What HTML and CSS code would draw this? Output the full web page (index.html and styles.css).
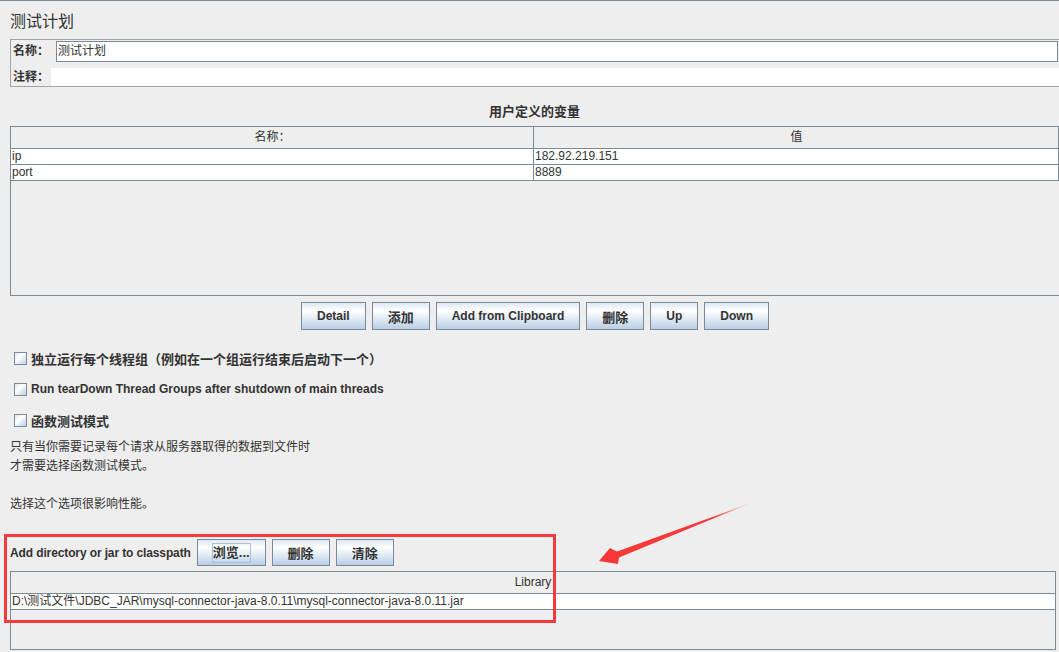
FILE: index.html
```html
<!DOCTYPE html>
<html lang="zh-CN">
<head>
    <meta charset="UTF-8">
    <title>测试计划</title>
    <link rel="stylesheet" href="styles.css">
</head>
<body>
    <div class="window">
        <div class="topline"></div>
        <h1 class="title">测试计划</h1>

        <div class="name-panel">
            <div class="field-row">
                <label class="field-label">名称：</label>
                <div class="text-field">测试计划</div>
            </div>
            <div class="field-row comment-row">
                <label class="field-label">注释：</label>
                <div class="text-area"></div>
            </div>
        </div>

        <div class="section-title">用户定义的变量</div>
        <div class="scroll-pane vars">
            <div class="grid-row head">
                <div class="cell name-col">名称：</div>
                <div class="cell">值</div>
            </div>
            <div class="grid-row">
                <div class="cell name-col">ip</div>
                <div class="cell">182.92.219.151</div>
            </div>
            <div class="grid-row">
                <div class="cell name-col">port</div>
                <div class="cell">8889</div>
            </div>
        </div>

        <div class="button-bar">
            <button class="btn">Detail</button>
            <button class="btn cjk">添加</button>
            <button class="btn">Add from Clipboard</button>
            <button class="btn cjk">删除</button>
            <button class="btn">Up</button>
            <button class="btn">Down</button>
        </div>

        <div class="options">
            <label class="check"><span class="box"></span>独立运行每个线程组（例如在一个组运行结束后启动下一个）</label>
            <label class="check en"><span class="box"></span>Run tearDown Thread Groups after shutdown of main threads</label>
            <label class="check"><span class="box"></span>函数测试模式</label>
        </div>

        <p class="note">只有当你需要记录每个请求从服务器取得的数据到文件时<br>才需要选择函数测试模式。<br><br>选择这个选项很影响性能。</p>

        <div class="classpath">
            <span class="cp-label">Add directory or jar to classpath</span>
            <button class="btn cjk browse"><span class="focus">浏览...</span></button>
            <button class="btn cjk">删除</button>
            <button class="btn cjk">清除</button>
        </div>
        <div class="lib-pane">
            <div class="lib-head">Library</div>
            <div class="lib-row">D:\测试文件\JDBC_JAR\mysql-connector-java-8.0.11\mysql-connector-java-8.0.11.jar</div>
        </div>

        <!-- annotation drawn over the screenshot -->
        <div class="red-box"></div>
        <svg class="arrow" width="1059" height="652" viewBox="0 0 1059 652">
            <defs>
                <linearGradient id="fade" x1="751" y1="503" x2="600" y2="561" gradientUnits="userSpaceOnUse">
                    <stop offset="0" stop-color="#ff6b6b" stop-opacity="0.4"/>
                    <stop offset="0.25" stop-color="#f63c3c"/>
                    <stop offset="1" stop-color="#f53737"/>
                </linearGradient>
            </defs>
            <polygon points="599,561 610,548 617,551.5 751,503 619,557.5 618,564" fill="url(#fade)"/>
        </svg>
    </div>
</body>
</html>
```

FILE: styles.css
```css
body {
    margin: 0;
    padding: 0;
    background: #eeeeee;
    color: #333333;
    font-family: "Liberation Sans", "Noto Sans CJK SC", sans-serif;
    font-size: 12px;
    overflow: hidden;
}

.window {
    position: relative;
    width: 1059px;
    height: 652px;
    overflow: hidden;
}

.topline {
    height: 1px;
    background: #7a8a99;
}

.title {
    margin: 0;
    padding: 11px 0 0 10px;
    font-size: 16px;
    font-weight: normal;
    line-height: 20px;
}

/* name / comment box */
.name-panel {
    margin: 7px 0 0 10px;
    border: 1px solid #a3a3a3;
    border-right: none;
}

.field-row {
    display: flex;
    height: 22px;
}

.field-label {
    width: 45px;
    padding-left: 2px;
    box-sizing: border-box;
    font-weight: bold;
    line-height: 22px;
}

.text-field {
    flex: 1;
    height: 21px;
    margin: 1px 1px 0 0;
    padding-left: 1px;
    box-sizing: border-box;
    border: 1px solid #7a8a99;
    background: #ffffff;
    line-height: 19px;
}

.comment-row {
    height: 24px;
}

.comment-row .field-label {
    width: 40px;
    padding-top: 6px;
    line-height: 18px;
}

.text-area {
    flex: 1;
    height: 18px;
    margin-top: 6px;
    background: #ffffff;
}

.section-title {
    margin-top: 17px;
    padding-left: 10px;
    text-align: center;
    font-size: 13px;
    font-weight: bold;
    line-height: 16px;
}

/* tables */
.scroll-pane {
    margin: 6px 0 0 10px;
    border: 1px solid #7a8a99;
}

.vars {
    height: 168px;
    border-right: none;
}

.grid-row {
    display: flex;
    height: 16px;
    box-sizing: border-box;
    border-bottom: 1px solid #7a8a99;
    border-right: 1px solid #7a8a99;
    background: #ffffff;
}

.grid-row.head {
    height: 22px;
    background: #eeeeee;
}

.cell {
    flex: 1;
    padding-left: 1px;
    line-height: 15px;
    white-space: nowrap;
}

.name-col {
    flex: none;
    width: 523px;
    box-sizing: border-box;
    border-right: 1px solid #7a8a99;
}

.head .cell {
    text-align: center;
    line-height: 21px;
}

/* buttons */
.button-bar {
    display: flex;
    justify-content: center;
    gap: 6px;
    margin-top: 6px;
    padding-left: 11px;
}

.btn {
    height: 28px;
    padding: 0 15px;
    border: 1px solid #7a8a99;
    border-radius: 0;
    background: linear-gradient(#dde8f3 0%, #ffffff 30%, #b8cfe5 100%);
    color: #333333;
    font-family: inherit;
    font-size: 12px;
    font-weight: bold;
    cursor: default;
}

.btn.cjk {
    font-size: 13px;
}

.btn.browse {
    padding: 0 14px;
}

.focus {
    display: inline-block;
    border: 1px solid #a8c0d8;
    line-height: 18px;
}

/* checkboxes */
.options {
    display: flex;
    flex-direction: column;
    gap: 11px;
    padding: 18px 0 0 14px;
}

.check {
    display: flex;
    align-items: center;
    height: 20px;
    font-size: 13px;
    font-weight: bold;
}

.check.en {
    font-size: 12px;
}

.box {
    width: 13px;
    height: 13px;
    margin-right: 4px;
    box-sizing: border-box;
    border: 1px solid #7a8a99;
    background: linear-gradient(135deg, #dde8f3 0%, #ffffff 40%, #b8cfe5 100%);
}

.note {
    margin: 8px 0 0;
    padding-left: 10px;
    line-height: 19px;
}

/* classpath */
.classpath {
    display: flex;
    align-items: center;
    gap: 6px;
    height: 27px;
    margin-top: 25px;
    padding-left: 10px;
}

.classpath .btn {
    height: 27px;
}

.cp-label {
    font-weight: bold;
    letter-spacing: -0.12px;
}

.lib-pane {
    width: 1044px;
    height: 77px;
    margin: 5px 0 0 10px;
    box-sizing: content-box;
    border: 1px solid #7a8a99;
}

.lib-head {
    height: 22px;
    box-sizing: border-box;
    border-bottom: 1px solid #7a8a99;
    text-align: center;
    line-height: 21px;
}

.lib-row {
    height: 16px;
    box-sizing: border-box;
    padding-left: 1px;
    border-bottom: 1px solid #7a8a99;
    background: #ffffff;
    line-height: 15px;
    white-space: nowrap;
}

/* red annotation */
.red-box {
    position: absolute;
    left: 4px;
    top: 534px;
    width: 552px;
    height: 89px;
    box-sizing: border-box;
    border: 3px solid #f33b3b;
}

.arrow {
    position: absolute;
    left: 0;
    top: 0;
    pointer-events: none;
}
```
